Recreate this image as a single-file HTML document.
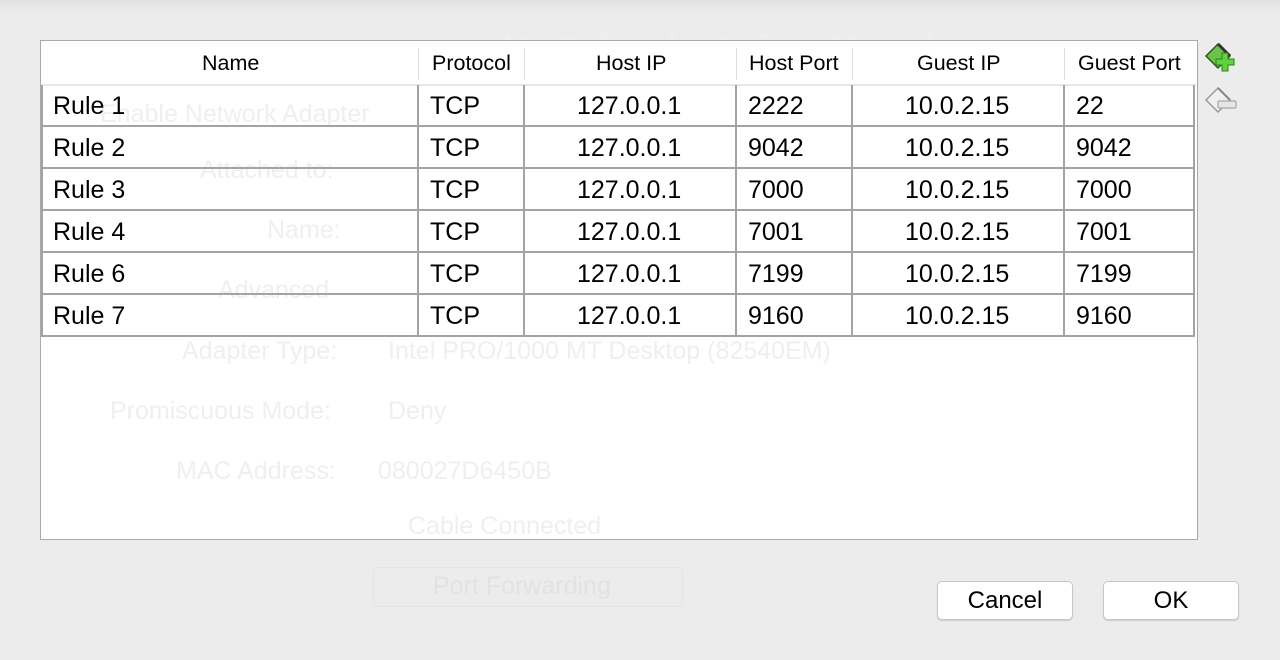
<!DOCTYPE html>
<html><head><style>
body{margin:0;width:1280px;height:660px;background:#ececec;font-family:"Liberation Sans",Arial,sans-serif;position:relative;overflow:hidden}
.a{position:absolute}
.top{left:0;top:0;width:1280px;height:14px;background:linear-gradient(#e2e2e2,#ececec)}
.tbl{left:40px;top:40px;width:1156px;height:498px;background:#fff;border:1px solid #a9a9a9}
.g{color:#efefef;font-size:25px;white-space:nowrap}
.h{font-size:21.5px;color:#000;top:51px;white-space:nowrap}
.hs{top:48px;width:1px;height:32px;background:#ddd}
.hl{left:41px;top:84px;width:1155px;height:2px;background:#e8e8e8}
.v{width:2px;background:#a3a3a3;top:85px;height:252px}
.r{left:42px;width:1153px;height:2px;background:#a3a3a3}
.c{font-size:25px;color:#000;white-space:nowrap}
.btn{top:581px;width:136px;height:39px;background:#fff;border:1px solid #c8c8c8;border-radius:5px;box-shadow:0 1px 1px rgba(0,0,0,.15);font-size:24px;text-align:center;line-height:38px;box-sizing:border-box}
</style></head><body>
<div class="a top"></div>
<div class="a g" style="left:500px;top:30px">Adapter 2</div>
<div class="a g" style="left:663px;top:30px">Adapter 3</div>
<div class="a g" style="left:827px;top:30px">Adapter 4</div>
<div class="a tbl"></div>
<div class="a g" style="left:100px;top:100px">Enable Network Adapter</div>
<div class="a g" style="left:200px;top:156px">Attached to:</div>
<div class="a g" style="left:267px;top:216px">Name:</div>
<div class="a g" style="left:218px;top:276px">Advanced</div>
<div class="a g" style="left:182px;top:337px">Adapter Type:</div>
<div class="a g" style="left:388px;top:337px">Intel PRO/1000 MT Desktop (82540EM)</div>
<div class="a g" style="left:110px;top:397px">Promiscuous Mode:</div>
<div class="a g" style="left:388px;top:397px">Deny</div>
<div class="a g" style="left:176px;top:457px">MAC Address:</div>
<div class="a g" style="left:378px;top:457px">080027D6450B</div>
<div class="a g" style="left:408px;top:512px">Cable Connected</div>
<div class="a" style="left:373px;top:567px;width:308px;height:38px;border:1px solid #e4e4e4;border-radius:5px"></div>
<div class="a g" style="left:433px;top:572px;color:#e2e2e2">Port Forwarding</div>
<div class="a h" style="left:202px">Name</div>
<div class="a hs" style="left:418px"></div>
<div class="a h" style="left:432px">Protocol</div>
<div class="a hs" style="left:524px"></div>
<div class="a h" style="left:596px">Host IP</div>
<div class="a hs" style="left:736px"></div>
<div class="a h" style="left:749px">Host Port</div>
<div class="a hs" style="left:852px"></div>
<div class="a h" style="left:917px">Guest IP</div>
<div class="a hs" style="left:1064px"></div>
<div class="a h" style="left:1078px">Guest Port</div>
<div class="a hl"></div>
<div class="a v" style="left:41px"></div>
<div class="a v" style="left:417px"></div>
<div class="a v" style="left:523px"></div>
<div class="a v" style="left:735px"></div>
<div class="a v" style="left:851px"></div>
<div class="a v" style="left:1063px"></div>
<div class="a v" style="left:1193px"></div>
<div class="a r" style="top:125px"></div>
<div class="a r" style="top:167px"></div>
<div class="a r" style="top:209px"></div>
<div class="a r" style="top:251px"></div>
<div class="a r" style="top:293px"></div>
<div class="a r" style="top:335px"></div>
<div class="a c" style="left:53px;top:92px">Rule 1</div><div class="a c" style="left:430px;top:92px">TCP</div><div class="a c" style="left:577px;top:92px">127.0.0.1</div><div class="a c" style="left:748px;top:92px">2222</div><div class="a c" style="left:905px;top:92px">10.0.2.15</div><div class="a c" style="left:1076px;top:92px">22</div>
<div class="a c" style="left:53px;top:134px">Rule 2</div><div class="a c" style="left:430px;top:134px">TCP</div><div class="a c" style="left:577px;top:134px">127.0.0.1</div><div class="a c" style="left:748px;top:134px">9042</div><div class="a c" style="left:905px;top:134px">10.0.2.15</div><div class="a c" style="left:1076px;top:134px">9042</div>
<div class="a c" style="left:53px;top:176px">Rule 3</div><div class="a c" style="left:430px;top:176px">TCP</div><div class="a c" style="left:577px;top:176px">127.0.0.1</div><div class="a c" style="left:748px;top:176px">7000</div><div class="a c" style="left:905px;top:176px">10.0.2.15</div><div class="a c" style="left:1076px;top:176px">7000</div>
<div class="a c" style="left:53px;top:218px">Rule 4</div><div class="a c" style="left:430px;top:218px">TCP</div><div class="a c" style="left:577px;top:218px">127.0.0.1</div><div class="a c" style="left:748px;top:218px">7001</div><div class="a c" style="left:905px;top:218px">10.0.2.15</div><div class="a c" style="left:1076px;top:218px">7001</div>
<div class="a c" style="left:53px;top:260px">Rule 6</div><div class="a c" style="left:430px;top:260px">TCP</div><div class="a c" style="left:577px;top:260px">127.0.0.1</div><div class="a c" style="left:748px;top:260px">7199</div><div class="a c" style="left:905px;top:260px">10.0.2.15</div><div class="a c" style="left:1076px;top:260px">7199</div>
<div class="a c" style="left:53px;top:302px">Rule 7</div><div class="a c" style="left:430px;top:302px">TCP</div><div class="a c" style="left:577px;top:302px">127.0.0.1</div><div class="a c" style="left:748px;top:302px">9160</div><div class="a c" style="left:905px;top:302px">10.0.2.15</div><div class="a c" style="left:1076px;top:302px">9160</div>
<svg class="a" style="left:1204px;top:42px" width="36" height="34" viewBox="0 0 36 34">
<path d="M2 14 L14 2 L26 14 L14 26 Z" fill="#6cc24a" stroke="#2d5a1c" stroke-width="1.5"/>
<path d="M14 2 L26 14" stroke="#333" stroke-width="3"/>
<path d="M18 11h6v6h6v6h-6v6h-6v-6h-6v-6h6z" fill="#5fd23c" stroke="#2f7a1e" stroke-width="1"/>
</svg>
<svg class="a" style="left:1204px;top:86px" width="36" height="32" viewBox="0 0 36 32">
<path d="M2 14 L14 2 L26 14 L14 26 Z" fill="#f0f0f0" stroke="#9a9a9a" stroke-width="1.5"/>
<path d="M14 2 L26 14" stroke="#888" stroke-width="2"/>
<rect x="14" y="15" width="18" height="7" rx="1" fill="#e6e6e6" stroke="#999"/>
</svg>
<div class="a btn" style="left:937px">Cancel</div>
<div class="a btn" style="left:1103px">OK</div>
</body></html>
